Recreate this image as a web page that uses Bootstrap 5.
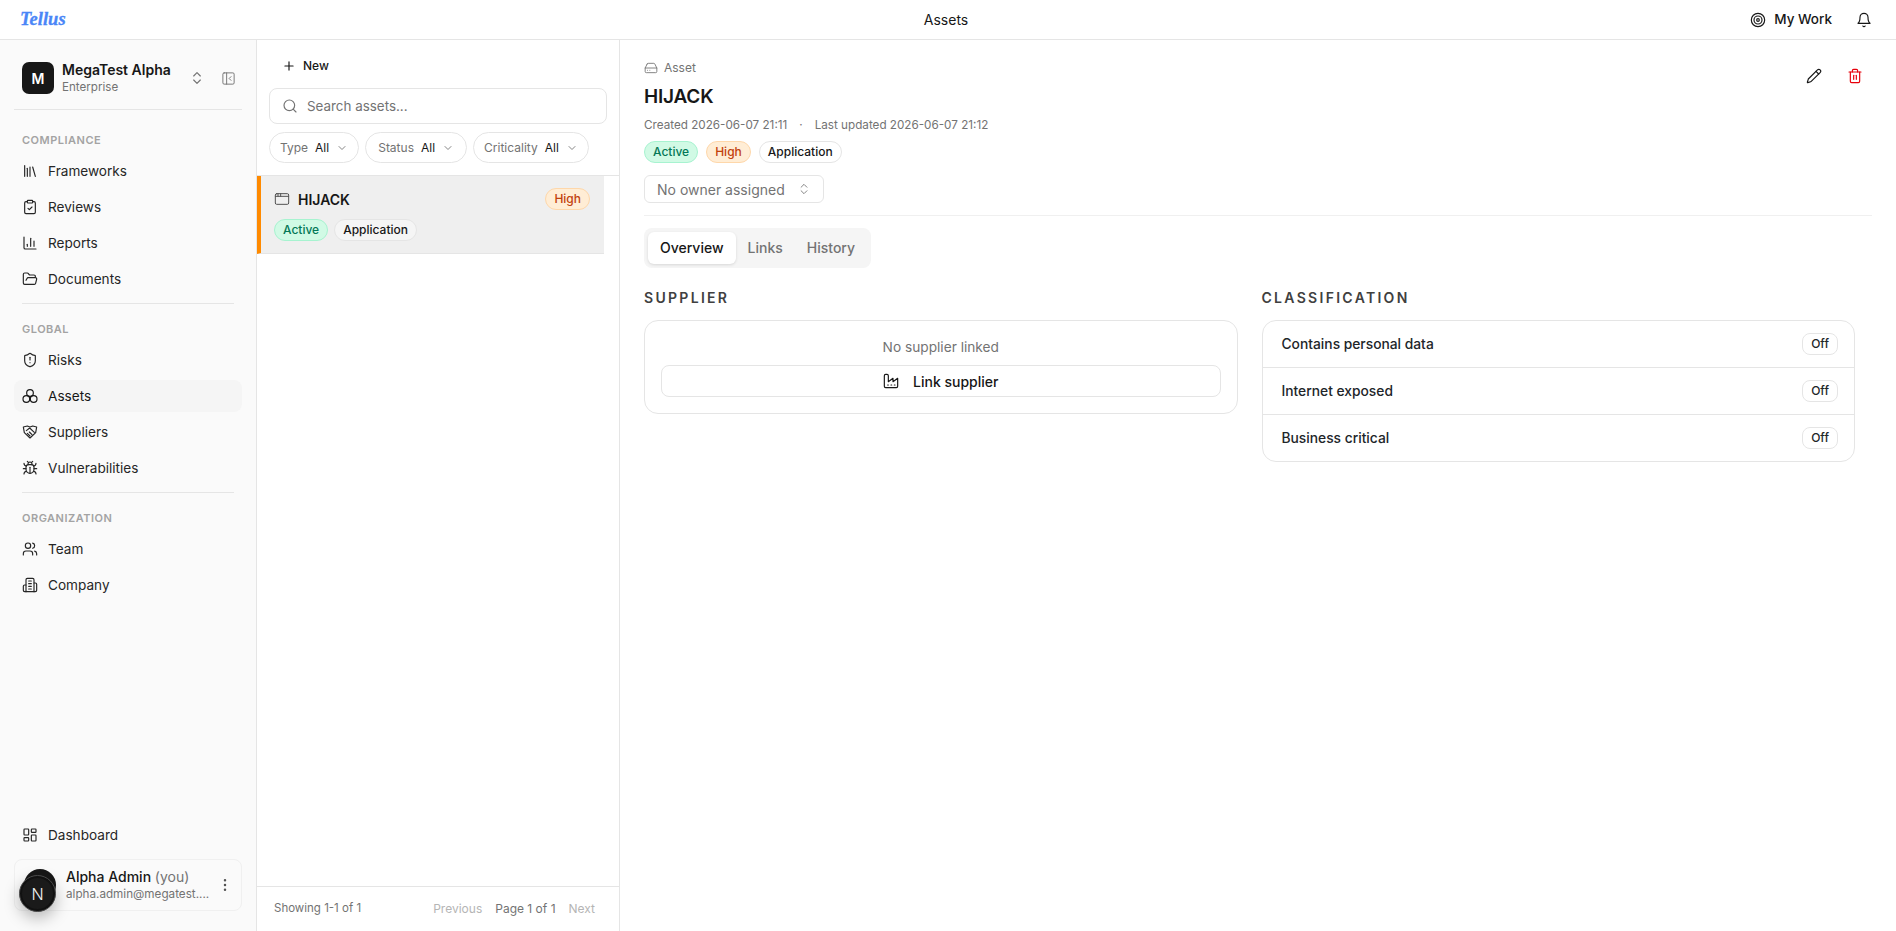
<!DOCTYPE html>
<html lang="en">
<head>
    <meta charset="UTF-8">
    <meta name="viewport" content="width=device-width, initial-scale=1.0">
    <title>Assets</title>
    <link href="https://cdn.jsdelivr.net/npm/bootstrap@5.3.0/dist/css/bootstrap.min.css" rel="stylesheet">
    <style>
        html, body { height: 100%; }
        body {
            font-family: Inter, "Liberation Sans", sans-serif;
            font-size: 14px;
            color: #171717;
            background: #fff;
            overflow: hidden;
        }
        .ico {
            width: 16px; height: 16px; flex: none;
            fill: none; stroke: currentColor; stroke-width: 1.75;
            stroke-linecap: round; stroke-linejoin: round;
        }

        /* top bar */
        .topbar {
            height: 40px; flex: none; padding: 0 24px 0 20px;
            border-bottom: 1px solid #e5e5e5; background: #fff;
        }
        .topbar-side { flex: 1 1 0; }
        .logo {
            font-family: "Liberation Serif", serif; font-style: italic; font-weight: 700;
            font-size: 18.5px; color: #4a86f7; line-height: 1; -webkit-text-stroke: .3px #4a86f7;
        }
        .topbar-title { font-size: 14px; font-weight: 400; }
        .mywork { font-size: 13.5px; font-weight: 500; }

        /* sidebar */
        .side {
            width: 257px; flex: none; padding: 22px 14px 20px;
            background: #fafafa; border-right: 1px solid #e5e5e5;
        }
        .org { padding: 0 6px 15px 8px; border-bottom: 1px solid #e5e5e5; }
        .org-box {
            width: 32px; height: 32px; border-radius: 7px; background: #171717; color: #fff;
            font-weight: 600; font-size: 14px;
        }
        .org-text { margin: -2px 0; }
        .org-name { font-size: 14px; font-weight: 600; line-height: 18px; margin-top: 1px; }
        .org-plan { font-size: 11.6px; color: #737373; line-height: 17px; }
        .org-btn { color: #737373; }
        .org-panel { stroke-width: 1.5; width: 15px; height: 15px; }
        .side-label {
            font-size: 11px; font-weight: 600; letter-spacing: .5px; color: #a3a3a3;
            height: 20px; line-height: 20px; padding-left: 8px; margin-bottom: 3px; text-transform: uppercase;
        }
        .side-group { padding-top: 15px; }
        .side-group.first { padding-top: 20px; }
        .side .nav-link {
            height: 32px; margin: 2px 0; padding: 0 8px; gap: 10px; border-radius: 8px;
            color: #262626; font-size: 13.6px;
        }
        .side .nav-link.active { background: #f5f5f5; color: #171717; }
        .side-rule { margin: 6px 8px 0; border-top: 1px solid #e5e5e5; }
        .user {
            height: 52px; margin-top: 6px; padding: 0 8px 0 9px; gap: 10px;
            border: 1px solid #f0f0f0; border-radius: 8px; background: #fafafa;
        }
        .user-avatar { width: 32px; height: 32px; border-radius: 50%; background: #171717; flex: none; }
        .user-name { font-size: 14px; font-weight: 500; line-height: 18px; white-space: nowrap; }
        .user-name span { color: #737373; font-weight: 400; }
        .user-mail { font-size: 11.7px; color: #737373; line-height: 17px; white-space: nowrap; }
        .devtool {
            position: absolute; left: 19px; bottom: 19px; width: 37px; height: 37px; border-radius: 50%;
            background: #1a1a1a; color: #f0f0f0; border: 1px solid #4a4a4a; font-size: 16px; font-weight: 300;
            box-shadow: inset 0 0 0 2px #111, 0 6px 16px rgba(0,0,0,.28);
        }

        /* list pane */
        .listpane { width: 363px; flex: none; border-right: 1px solid #e5e5e5; }
        .listhead { padding: 0 12px; height: 136px; flex: none; border-bottom: 1px solid #e5e5e5; }
        .newbtn {
            font-size: 12px; font-weight: 500; color: #171717; gap: 7px;
            height: 32px; padding: 0 13px; margin: 10px 0 6px; border: 0;
        }
        .newbtn .ico { width: 14px; height: 14px; stroke-width: 2; }
        .searchbox {
            height: 36px; border: 1px solid #e5e5e5; border-radius: 8px; padding: 0 12px; gap: 9px; color: #737373;
        }
        .searchbox .form-control {
            border: 0; padding: 0; font-size: 13.4px; background: none; box-shadow: none; color: #171717;
        }
        .searchbox .form-control::placeholder { color: #737373; }
        .pills { gap: 6px; margin-top: 8px; }
        .pill {
            height: 31px; padding: 0 10px; gap: 5px; border: 1px solid #e5e5e5; border-radius: 16px;
            font-size: 12px; color: #737373; background: #fff;
        }
        .pill.wide { padding: 0 12px; }
        .pill b { font-weight: 400; color: #171717; margin-left: 2px; }
        .pill .ico { width: 12px; height: 12px; margin-left: 2px; }
        .listitem {
            margin-right: 15px; height: 78px; padding: 12px 14px 12px 13px;
            background: #efefef; border-left: 4px solid #ff8a00; border-bottom: 1px solid #e5e5e5;
        }
        .listitem .ico { color: #525252; stroke-width: 1.5; }
        .item-name { font-size: 14px; font-weight: 600; }
        .item-tags { gap: 6px; margin-top: 9px; }
        .listfoot {
            height: 45px; flex: none; border-top: 1px solid #e5e5e5; padding: 0 24px 0 17px;
            font-size: 12px; color: #737373;
        }
        .listfoot .count { font-size: 11.5px; }
        .listfoot .off { color: #b5b5b5; }
        .listfoot .mid { color: #737373; margin: 0 13px; }

        /* tags */
        .tag {
            height: 22px; line-height: 20px; padding: 0 8px; font-size: 12px; font-weight: 500;
            border: 1px solid #e5e5e5; color: #171717; background: #fff; display: inline-block;
        }
        .tag-active { background: #d1fae5; border-color: #a7f3d0; color: #047857; }
        .tag-high { background: #ffedd5; border-color: #fed7aa; color: #c2410c; }
        .tag-type { background: #f5f5f5; }

        /* detail */
        .detail { padding: 0 24px; min-width: 0; }
        .kicker { font-size: 12px; color: #737373; gap: 6px; margin-top: 20px; height: 16px; }
        .kicker .ico { width: 14px; height: 14px; stroke-width: 1.5; }
        .detail-title { font-size: 19px; letter-spacing: -.2px; font-weight: 600; line-height: 28px; margin: 7px 0 0; }
        .detail-meta { font-size: 11.7px; color: #737373; gap: 8px; height: 16px; margin-top: 7px; }
        .detail-tags { margin-top: 7px; }
        .ownerbtn {
            width: 180px; height: 28px; padding: 0 12px; margin-top: 12px; font-size: 14px; color: #737373;
            border: 1px solid #e5e5e5; border-radius: 6px; background: #fff;
        }
        .ownerbtn .ico { width: 14px; height: 14px; stroke-width: 1.5; }
        .detail-rule { margin-top: 12px; border-top: 1px solid #f0f0f0; }
        .tools { gap: 25px; padding: 28px 9px 0 0; }
        .tool { color: #171717; }
        .tool-del { color: #e7000b; }
        .tabs {
            margin-top: 12px; padding: 4px; background: #f5f5f5; border-radius: 8px; display: inline-flex;
        }
        .tabs .nav-link {
            height: 32px; padding: 0 12px; font-size: 14px; font-weight: 500; color: #737373; border-radius: 6px;
            line-height: 32px; background: none;
        }
        .tabs .nav-link.active {
            background: #fff; color: #171717; box-shadow: 0 1px 3px rgba(0,0,0,.12);
        }
        .detail-grid { display: grid; grid-template-columns: 1fr 1fr; gap: 24px; max-width: 1211px; margin-top: 22px; }
        .sect-label {
            font-size: 14px; font-weight: 600; letter-spacing: 2.3px; color: #404040;
            height: 16px; line-height: 16px; margin-bottom: 14px; text-transform: uppercase;
        }
        .panel { border: 1px solid #e5e5e5; border-radius: 14px; background: #fff; }
        .supplier-empty { padding: 16px; }
        .supplier-empty p { font-size: 13.7px; color: #737373; line-height: 20px; margin: 0 0 8px; text-align: center; }
        .linkbtn {
            height: 32px; width: 100%; gap: 14px; font-size: 14px; font-weight: 500; color: #171717;
            border: 1px solid #e5e5e5; border-radius: 8px; background: #fff; padding: 0;
        }
        .panel .list-group-item {
            height: 47px; padding: 0 16px 0 19px; font-size: 13.8px; font-weight: 500; background: none;
            border-color: #e5e5e5;
        }
        .panel .list-group-item:last-child { height: 46px; }
        .offpill {
            height: 22px; line-height: 20px; padding: 0 8px; font-size: 12px; font-weight: 500;
            border: 1px solid #e5e5e5; border-radius: 8px; background: #fff;
        }
    </style>
</head>
<body class="d-flex flex-column">
    <svg width="0" height="0" class="position-absolute">
        <symbol id="i-library" viewBox="0 0 24 24"><path d="m16 6 4 14"/><path d="M12 6v14"/><path d="M8 8v12"/><path d="M4 4v16"/></symbol>
        <symbol id="i-review" viewBox="0 0 24 24"><rect x="8" y="2" width="8" height="4" rx="1"/><path d="M16 4h2a2 2 0 0 1 2 2v14a2 2 0 0 1-2 2H6a2 2 0 0 1-2-2V6a2 2 0 0 1 2-2h2"/><path d="m9 14 2 2 4-4"/></symbol>
        <symbol id="i-chart" viewBox="0 0 24 24"><path d="M3 3v16a2 2 0 0 0 2 2h16"/><path d="M18 17V9"/><path d="M13 17V5"/><path d="M8 17v-3"/></symbol>
        <symbol id="i-folder" viewBox="0 0 24 24"><path d="m6 14 1.5-2.9A2 2 0 0 1 9.24 10H20a2 2 0 0 1 1.94 2.5l-1.54 6a2 2 0 0 1-1.95 1.5H4a2 2 0 0 1-2-2V5a2 2 0 0 1 2-2h3.9a2 2 0 0 1 1.69.9l.81 1.2a2 2 0 0 0 1.67.9H18a2 2 0 0 1 2 2v2"/></symbol>
        <symbol id="i-shield" viewBox="0 0 24 24"><path d="M20 13c0 5-3.5 7.5-7.66 8.95a1 1 0 0 1-.67-.01C7.5 20.5 4 18 4 13V6a1 1 0 0 1 1-1c2 0 4.5-1.2 6.24-2.72a1.17 1.17 0 0 1 1.52 0C14.51 3.81 17 5 19 5a1 1 0 0 1 1 1z"/><path d="M12 8v4"/><path d="M12 16h.01"/></symbol>
        <symbol id="i-assets" viewBox="0 0 24 24"><circle cx="12" cy="7.500" r="5"/><circle cx="6.500" cy="16.500" r="5"/><circle cx="17.500" cy="16.500" r="5"/></symbol>
        <symbol id="i-hands" viewBox="0 0 24 24"><path d="M2 4.500 8 3l4 1.500L16 3l6 1.500-1.500 8.500-8.500 8-8.500-8z"/><path d="m6.500 10 5-4 7 6.500"/><path d="m8 14 4 4M11 12l4 4"/></symbol>
        <symbol id="i-bug" viewBox="0 0 24 24"><path d="m8 2 1.880 1.880"/><path d="M14.120 3.880 16 2"/><path d="M9 7.130v-1a3.003 3.003 0 1 1 6 0v1"/><path d="M12 20c-3.300 0-6-2.700-6-6v-3a4 4 0 0 1 4-4h4a4 4 0 0 1 4 4v3c0 3.300-2.700 6-6 6"/><path d="M12 20v-9"/><path d="M6.530 9C4.600 8.800 3 7.100 3 5"/><path d="M6 13H2"/><path d="M3 21c0-2.100 1.700-3.900 3.800-4"/><path d="M20.970 5c0 2.100-1.600 3.800-3.500 4"/><path d="M22 13h-4"/><path d="M17.200 17c2.100.1 3.800 1.900 3.800 4"/></symbol>
        <symbol id="i-users" viewBox="0 0 24 24"><path d="M16 21v-2a4 4 0 0 0-4-4H6a4 4 0 0 0-4 4v2"/><circle cx="9" cy="7" r="4"/><path d="M22 21v-2a4 4 0 0 0-3-3.870"/><path d="M16 3.130a4 4 0 0 1 0 7.750"/></symbol>
        <symbol id="i-building" viewBox="0 0 24 24"><path d="M6 22V4a2 2 0 0 1 2-2h8a2 2 0 0 1 2 2v18Z"/><path d="M6 12H4a2 2 0 0 0-2 2v6a2 2 0 0 0 2 2h2"/><path d="M18 9h2a2 2 0 0 1 2 2v9a2 2 0 0 1-2 2h-2"/><path d="M10 6h4"/><path d="M10 10h4"/><path d="M10 14h4"/><path d="M10 18h4"/></symbol>
        <symbol id="i-dash" viewBox="0 0 24 24"><rect x="3" y="3" width="7" height="9" rx="1"/><rect x="14" y="3" width="7" height="5" rx="1"/><rect x="14" y="12" width="7" height="9" rx="1"/><rect x="3" y="16" width="7" height="5" rx="1"/></symbol>
        <symbol id="i-updown" viewBox="0 0 24 24"><path d="m7 15 5 5 5-5"/><path d="m7 9 5-5 5 5"/></symbol>
        <symbol id="i-panel" viewBox="0 0 24 24"><rect x="3" y="3" width="18" height="18" rx="2"/><path d="M9 3v18"/><path d="m16 15-3-3 3-3"/></symbol>
        <symbol id="i-plus" viewBox="0 0 24 24"><path d="M5 12h14"/><path d="M12 5v14"/></symbol>
        <symbol id="i-search" viewBox="0 0 24 24"><circle cx="11" cy="11" r="8"/><path d="m21 21-4.300-4.300"/></symbol>
        <symbol id="i-down" viewBox="0 0 24 24"><path d="m6 9 6 6 6-6"/></symbol>
        <symbol id="i-app" viewBox="0 0 24 24"><rect x="2" y="4" width="20" height="16" rx="2"/><path d="M10 4v4"/><path d="M2 8h20"/><path d="M6 4v4"/></symbol>
        <symbol id="i-drive" viewBox="0 0 24 24"><path d="M22 12H2"/><path d="M5.450 5.110 2 12v6a2 2 0 0 0 2 2h16a2 2 0 0 0 2-2v-6l-3.450-6.890A2 2 0 0 0 16.760 4H7.240a2 2 0 0 0-1.790 1.110z"/><path d="M6 16h.01"/><path d="M10 16h.01"/></symbol>
        <symbol id="i-factory" viewBox="0 0 24 24"><path d="M2 20a2 2 0 0 0 2 2h16a2 2 0 0 0 2-2V8l-7 5V8l-7 5V4a2 2 0 0 0-2-2H4a2 2 0 0 0-2 2Z"/><path d="M17 18h1"/><path d="M12 18h1"/><path d="M7 18h1"/></symbol>
        <symbol id="i-target" viewBox="0 0 24 24"><circle cx="12" cy="12" r="10"/><circle cx="12" cy="12" r="6"/><circle cx="12" cy="12" r="2"/></symbol>
        <symbol id="i-bell" viewBox="0 0 24 24"><path d="M6 8a6 6 0 0 1 12 0c0 7 3 9 3 9H3s3-2 3-9"/><path d="M10.300 21a1.940 1.940 0 0 0 3.400 0"/></symbol>
        <symbol id="i-pencil" viewBox="0 0 24 24"><path d="M21.174 6.812a1 1 0 0 0-3.986-3.987L3.842 16.174a2 2 0 0 0-.5.83l-1.321 4.352a.5.5 0 0 0 .623.622l4.353-1.32a2 2 0 0 0 .83-.497z"/><path d="m15 5 4 4"/></symbol>
        <symbol id="i-trash" viewBox="0 0 24 24"><path d="M3 6h18"/><path d="M19 6v14c0 1-1 2-2 2H7c-1 0-2-1-2-2V6"/><path d="M8 6V4c0-1 1-2 2-2h4c1 0 2 1 2 2v2"/><path d="M10 11v6"/><path d="M14 11v6"/></symbol>
        <symbol id="i-dots" viewBox="0 0 24 24"><circle cx="12" cy="5" r="1"/><circle cx="12" cy="12" r="1"/><circle cx="12" cy="19" r="1"/></symbol>
    </svg>

    <nav class="topbar d-flex align-items-center">
        <div class="topbar-side"><span class="logo">Tellus</span></div>
        <div class="topbar-title">Assets</div>
        <div class="topbar-side d-flex align-items-center justify-content-end gap-4">
            <span class="mywork d-flex align-items-center gap-2"><svg class="ico"><use href="#i-target"/></svg>My Work</span>
            <svg class="ico"><use href="#i-bell"/></svg>
        </div>
    </nav>

    <div class="d-flex flex-grow-1" style="min-height:0">
        <aside class="side d-flex flex-column">
            <div class="org d-flex align-items-center">
                <div class="org-box d-flex align-items-center justify-content-center me-2">M</div>
                <div class="org-text flex-grow-1">
                    <div class="org-name">MegaTest Alpha</div>
                    <div class="org-plan">Enterprise</div>
                </div>
                <svg class="ico org-btn me-3"><use href="#i-updown"/></svg>
                <svg class="ico org-btn org-panel"><use href="#i-panel"/></svg>
            </div>

            <div class="side-group first">
                <div class="side-label">Compliance</div>
                <nav class="nav flex-column">
                    <a class="nav-link d-flex align-items-center" href="#"><svg class="ico"><use href="#i-library"/></svg>Frameworks</a>
                    <a class="nav-link d-flex align-items-center" href="#"><svg class="ico"><use href="#i-review"/></svg>Reviews</a>
                    <a class="nav-link d-flex align-items-center" href="#"><svg class="ico"><use href="#i-chart"/></svg>Reports</a>
                    <a class="nav-link d-flex align-items-center" href="#"><svg class="ico"><use href="#i-folder"/></svg>Documents</a>
                </nav>
            </div>
            <div class="side-rule"></div>
            <div class="side-group">
                <div class="side-label">Global</div>
                <nav class="nav flex-column">
                    <a class="nav-link d-flex align-items-center" href="#"><svg class="ico"><use href="#i-shield"/></svg>Risks</a>
                    <a class="nav-link active d-flex align-items-center" href="#"><svg class="ico"><use href="#i-assets"/></svg>Assets</a>
                    <a class="nav-link d-flex align-items-center" href="#"><svg class="ico"><use href="#i-hands"/></svg>Suppliers</a>
                    <a class="nav-link d-flex align-items-center" href="#"><svg class="ico"><use href="#i-bug"/></svg>Vulnerabilities</a>
                </nav>
            </div>
            <div class="side-rule"></div>
            <div class="side-group">
                <div class="side-label">Organization</div>
                <nav class="nav flex-column">
                    <a class="nav-link d-flex align-items-center" href="#"><svg class="ico"><use href="#i-users"/></svg>Team</a>
                    <a class="nav-link d-flex align-items-center" href="#"><svg class="ico"><use href="#i-building"/></svg>Company</a>
                </nav>
            </div>

            <nav class="nav flex-column mt-auto">
                <a class="nav-link d-flex align-items-center" href="#"><svg class="ico"><use href="#i-dash"/></svg>Dashboard</a>
            </nav>
            <div class="user d-flex align-items-center">
                <div class="user-avatar"></div>
                <div class="flex-grow-1" style="min-width:0">
                    <div class="user-name">Alpha Admin <span>(you)</span></div>
                    <div class="user-mail">alpha.admin@megatest....</div>
                </div>
                <svg class="ico" style="color:#525252"><use href="#i-dots"/></svg>
            </div>
        </aside>

        <section class="listpane d-flex flex-column">
            <div class="listhead">
                <button class="btn newbtn d-flex align-items-center" type="button"><svg class="ico"><use href="#i-plus"/></svg>New</button>
                <div class="searchbox d-flex align-items-center">
                    <svg class="ico"><use href="#i-search"/></svg>
                    <input class="form-control" type="text" placeholder="Search assets...">
                </div>
                <div class="pills d-flex">
                    <span class="pill d-flex align-items-center">Type <b>All</b><svg class="ico"><use href="#i-down"/></svg></span>
                    <span class="pill wide d-flex align-items-center">Status <b>All</b><svg class="ico"><use href="#i-down"/></svg></span>
                    <span class="pill d-flex align-items-center">Criticality <b>All</b><svg class="ico"><use href="#i-down"/></svg></span>
                </div>
            </div>
            <div class="flex-grow-1">
                <div class="listitem">
                    <div class="d-flex align-items-center">
                        <svg class="ico me-2"><use href="#i-app"/></svg>
                        <span class="item-name flex-grow-1">HIJACK</span>
                        <span class="tag tag-high rounded-pill">High</span>
                    </div>
                    <div class="item-tags d-flex">
                        <span class="tag tag-active rounded-pill">Active</span>
                        <span class="tag tag-type rounded-pill">Application</span>
                    </div>
                </div>
            </div>
            <div class="listfoot d-flex align-items-center">
                <span class="count flex-grow-1">Showing 1-1 of 1</span>
                <span class="off">Previous</span>
                <span class="mid">Page 1 of 1</span>
                <span class="off">Next</span>
            </div>
        </section>

        <main class="detail flex-grow-1">
            <div class="d-flex justify-content-between">
                <div>
                    <div class="kicker d-flex align-items-center"><svg class="ico"><use href="#i-drive"/></svg>Asset</div>
                    <h1 class="detail-title">HIJACK</h1>
                </div>
                <div class="tools d-flex align-items-start">
                    <svg class="ico tool"><use href="#i-pencil"/></svg>
                    <svg class="ico tool-del"><use href="#i-trash"/></svg>
                </div>
            </div>
            <div class="detail-meta d-flex align-items-center">
                <span>Created 2026-06-07 21:11</span><span class="mx-1">·</span><span>Last updated 2026-06-07 21:12</span>
            </div>
            <div class="detail-tags d-flex gap-2">
                <span class="tag tag-active rounded-pill">Active</span>
                <span class="tag tag-high rounded-pill">High</span>
                <span class="tag rounded-pill">Application</span>
            </div>
            <button class="ownerbtn d-flex align-items-center justify-content-between" type="button">No owner assigned<svg class="ico"><use href="#i-updown"/></svg></button>
            <div class="detail-rule"></div>
            <nav class="nav tabs">
                <a class="nav-link active" href="#">Overview</a>
                <a class="nav-link" href="#">Links</a>
                <a class="nav-link" href="#">History</a>
            </nav>
            <div class="detail-grid">
                <div>
                    <div class="sect-label">Supplier</div>
                    <div class="card panel supplier-empty">
                        <p>No supplier linked</p>
                        <button class="linkbtn d-flex align-items-center justify-content-center" type="button"><svg class="ico"><use href="#i-factory"/></svg>Link supplier</button>
                    </div>
                </div>
                <div>
                    <div class="sect-label">Classification</div>
                    <div class="card panel overflow-hidden">
                        <ul class="list-group list-group-flush">
                            <li class="list-group-item d-flex align-items-center justify-content-between">Contains personal data<span class="offpill">Off</span></li>
                            <li class="list-group-item d-flex align-items-center justify-content-between">Internet exposed<span class="offpill">Off</span></li>
                            <li class="list-group-item d-flex align-items-center justify-content-between">Business critical<span class="offpill">Off</span></li>
                        </ul>
                    </div>
                </div>
            </div>
        </main>
    </div>

    <div class="devtool d-flex align-items-center justify-content-center">N</div>

    <script src="https://cdn.jsdelivr.net/npm/bootstrap@5.3.0/dist/js/bootstrap.bundle.min.js"></script>
</body>
</html>
